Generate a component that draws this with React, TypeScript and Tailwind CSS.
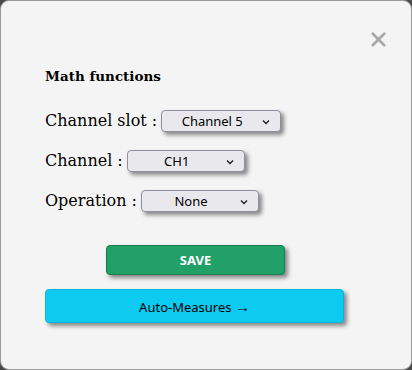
import { X } from "lucide-react";

function Select({ value, width }: { value: string; width: string }) {
  return (
    <div
      className={`${width} h-[22px] flex items-center justify-center relative rounded-[4px] border border-[#8f8f9d] bg-[#e9e9ed] shadow-[3px_3px_4px_rgba(0,0,0,0.45)] text-[13px] text-black pr-[24px] pl-[6px]`}
      style={{ fontFamily: '"Noto Sans", sans-serif' }}
    >
      <span>{value}</span>
      <svg className="absolute right-[10px] top-[8px]" width="8" height="6" viewBox="0 0 8 6">
        <path d="M1 1.5 L4 4.5 L7 1.5" fill="none" stroke="#222" strokeWidth="1.4" />
      </svg>
    </div>
  );
}

export default function App() {
  return (
    <div className="w-[412px] h-[370px] bg-[#4a4a4a]" style={{ fontFamily: '"Noto Sans", sans-serif' }}>
      <div className="w-full h-full rounded-[9px] border border-[#9a9a9a] bg-[#f4f4f4] relative">
        <button className="absolute right-[21px] top-[27px] text-[#a8a8a8]">
          <X size={23} strokeWidth={2.8} />
        </button>
        <div className="pt-[65px] pl-[44px]">
          <h2 className="text-[13.5px] font-bold text-black" style={{ fontFamily: '"DejaVu Serif", serif' }}>
            Math functions
          </h2>
          <div className="mt-[23px] flex flex-col gap-[16px]" style={{ fontFamily: '"DejaVu Serif", serif' }}>
            <div className="flex items-center gap-[4px]">
              <span className="text-[16px] text-black">Channel slot :</span>
              <Select value="Channel 5" width="w-[120px]" />
            </div>
            <div className="flex items-center gap-[4px]">
              <span className="text-[16px] text-black">Channel :</span>
              <Select value="CH1" width="w-[118px]" />
            </div>
            <div className="flex items-center gap-[4px]">
              <span className="text-[16px] text-black">Operation :</span>
              <Select value="None" width="w-[118px]" />
            </div>
          </div>
          <div className="mt-[32px] pl-[61px]">
            <button className="w-[179px] h-[30px] rounded-[4px] border border-[#1b7a50] bg-[#21a067] text-white font-bold text-[13px] shadow-[3px_3px_4px_rgba(0,0,0,0.45)]">
              SAVE
            </button>
          </div>
          <div className="mt-[14px]">
            <button className="w-[299px] h-[34px] rounded-[4px] border border-[#0bb5d8] bg-[#0dcaf0] text-black text-[13px] shadow-[3px_3px_4px_rgba(0,0,0,0.45)]">
              Auto-Measures <span className="text-[15px]">→</span>
            </button>
          </div>
        </div>
      </div>
    </div>
  );
}
